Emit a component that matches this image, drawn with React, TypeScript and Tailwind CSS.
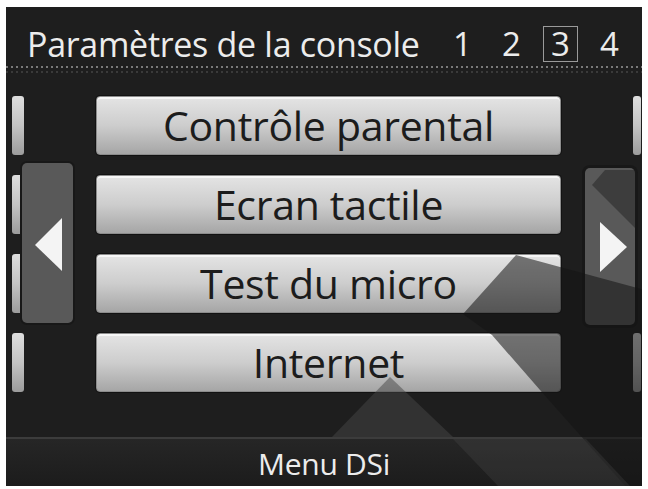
import React from 'react';

const items = ['Contrôle parental', 'Ecran tactile', 'Test du micro', 'Internet'];
const pages = ['1', '2', '3', '4'];

function Stub({ hidden, className }: { hidden?: boolean; className: string }) {
  return (
    <div
      className={
        hidden
          ? `h-[59px] ${className}`
          : `h-[59px] rounded-[3px] bg-gradient-to-b from-[#dedede] via-[#c4c4c4] to-[#9c9c9c] ${className}`
      }
    />
  );
}

export default function App() {
  return (
    <div className="w-[648px] h-[489px] bg-white pt-[7px] pl-[6px] font-['Open_Sans',sans-serif]">
      <div className="relative w-[636px] h-[479px] bg-[#1e1e1e] overflow-hidden flex flex-col">
        {/* Header */}
        <div className="h-[61px] flex flex-col">
          <div className="flex items-center pt-[19px] pl-[21px] pr-[15px]">
            <span className="text-[#ececec] text-[34px] leading-[36px] tracking-[-0.3px]">Paramètres de la console</span>
            <div className="ml-auto flex gap-[14px]">
              {pages.map(p => (
                <div
                  key={p}
                  className={
                    p === '3'
                      ? 'w-[35px] h-[36px] flex items-center justify-center text-[#ececec] text-[33px] border border-[#9a9a9a]'
                      : 'w-[35px] h-[36px] flex items-center justify-center text-[#ececec] text-[33px]'
                  }
                >
                  {p}
                </div>
              ))}
            </div>
          </div>
          <div className="mt-auto h-[2px] bg-[repeating-linear-gradient(90deg,#7a7a7a_0_2px,transparent_2px_5px)]" />
          <div className="h-[2px] mt-[3px] bg-[repeating-linear-gradient(90deg,#3a3a3a_0_2px,transparent_2px_5px)] mb-[-5px]" />
        </div>

        {/* Middle */}
        <div className="h-[369px] flex">
          <div className="relative w-[90px] pt-[28px] pl-[6px]">
            <div className="flex flex-col gap-[20px] w-[12px]">
              {items.map(i => <Stub key={i} className="w-[12px]" />)}
            </div>
            <div className="absolute left-[16px] top-[95px] w-[51px] h-[160px] rounded-[5px] bg-[#595959] shadow-[0_0_0_2px_#181818]">
              <svg width="51" height="160" className="block">
                <polygon points="13,82 40,55 40,108" fill="#f4f4f4" />
              </svg>
            </div>
          </div>

          <div className="w-[465px] pt-[28px] flex flex-col gap-[20px]">
            {items.map(label => (
              <div
                key={label}
                className="h-[59px] rounded-[4px] bg-gradient-to-b from-[#e4e4e4] via-[#cdcdcd] to-[#a6a6a6] border border-[#8c8c8c] shadow-[inset_0_2px_0_#f6f6f6,0_0_0_1px_#121212] flex items-center justify-center text-[#1c1c1c] text-[41px] leading-none tracking-[-0.3px]"
              >
                {label}
              </div>
            ))}
          </div>

          <div className="relative flex-1 pt-[28px] pl-[72px]">
            <div className="flex flex-col gap-[20px] w-[8px]">
              {items.map((i, idx) => (
                <Stub key={i} hidden={idx === 1 || idx === 2} className="w-[8px]" />
              ))}
            </div>
            <div className="absolute left-[24px] top-[100px] w-[50px] h-[157px] rounded-[5px] bg-[#595959] shadow-[0_0_0_3px_#181818]">
              <svg width="50" height="157" className="block">
                <polygon points="15,54 42,79 15,104" fill="#f4f4f4" />
              </svg>
            </div>
          </div>
        </div>

        {/* Bottom bar */}
        <div className="h-[49px] border-t-2 border-[#3c3c3c] bg-gradient-to-b from-[#262626] to-[#1c1c1c] flex items-center justify-center">
          <span className="text-[#ececec] text-[30px] leading-none mt-[2px] tracking-[-0.3px]">Menu DSi</span>
        </div>

        {/* Decorative background shapes */}
        <svg
          width="648"
          height="489"
          viewBox="0 0 648 489"
          className="pointer-events-none absolute left-[-6px] top-[-7px]"
        >
          <polygon
            points="463,314 516,255 560,267 648,291 648,489 628,489 540,390 492,335"
            fill="#141414"
            opacity="0.55"
          />
          <polygon points="390,377 453,437 332,437" fill="#464646" opacity="0.5" />
          <polygon points="453,439 586,439 630,486 498,486" fill="#5a5a5a" opacity="0.22" />
          <polygon points="592,185 605,170 636,170 636,229" fill="#1a1a1a" opacity="0.45" />
        </svg>
      </div>
    </div>
  );
}
